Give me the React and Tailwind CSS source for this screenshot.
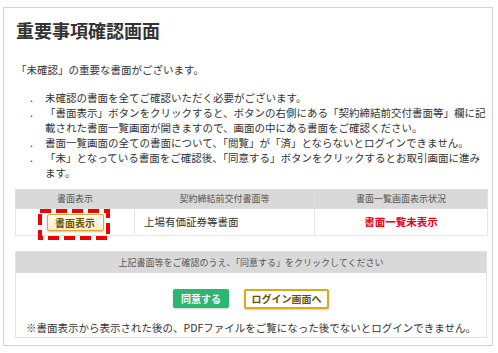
import React from 'react';

const font = { fontFamily: '"Noto Sans CJK JP", "Noto Sans", sans-serif' };

const notes = [
  '未確認の書面を全てご確認いただく必要がございます。',
  '「書面表示」ボタンをクリックすると、ボタンの右側にある「契約締結前交付書面等」欄に記載された書面一覧画面が開きますので、画面の中にある書面をご確認ください。',
  '書面一覧画面の全ての書面について、「閲覧」が「済」とならないとログインできません。',
  '「未」となっている書面をご確認後、「同意する」ボタンをクリックするとお取引画面に進みます。',
];

const App = () => {
  return (
    <div className="w-[498px] h-[353px] bg-white overflow-hidden pt-[7px] pl-[3px]" style={font}>
      <div className="w-[490px] h-[339px] border border-[#d4d4d4] bg-white">
        {/* Title */}
        <h1 className="pt-[10px] pl-[12px] text-[18px] leading-[24px] font-bold text-[#333]">
          重要事項確認画面
        </h1>

        <p className="mt-[20px] pl-[12px] text-[10.5px] leading-[15px] text-[#333]">
          「未確認」の重要な書面がございます。
        </p>

        {/* Notes */}
        <ul className="mt-[13px] pl-[26px] pr-[2px] text-[10.5px] leading-[15px] text-[#333]">
          {notes.map((n) => (
            <li key={n} className="flex">
              <span className="w-[15px] shrink-0">.</span>
              <span>{n}</span>
            </li>
          ))}
        </ul>

        {/* Document table */}
        <div className="relative mt-[9px] ml-[11px] w-[472px]">
          <table className="w-[472px] table-fixed border-collapse">
            <thead>
              <tr className="h-[19px] bg-[#d9d9d9] text-[9px] text-[#555]">
                <th className="w-[119px] border border-[#dedede] font-normal">書面表示</th>
                <th className="w-[180px] border border-[#dedede] font-normal">契約締結前交付書面等</th>
                <th className="w-[173px] border border-[#dedede] font-normal">書面一覧画面表示状況</th>
              </tr>
            </thead>
            <tbody>
              <tr className="h-[27px] text-[10.5px]">
                <td className="border border-[#e6e6e6] text-center">
                  <button className="w-[57px] h-[17px] border border-[#d6ab2e] rounded-[2px] bg-gradient-to-b from-[#fffdf2] to-[#f6edc9] text-[10px] font-bold text-[#6b5200] leading-[15px] shadow-[0_1px_2px_rgba(0,0,0,0.25)]">
                    書面表示
                  </button>
                </td>
                <td className="border border-[#e6e6e6] pl-[9px] text-[#333]">上場有価証券等書面</td>
                <td className="border border-[#e6e6e6] text-center font-bold text-[#e60012]">書面一覧未表示</td>
              </tr>
            </tbody>
          </table>
          {/* highlight */}
          <svg className="absolute left-[23px] top-[20px] pointer-events-none" width="72" height="31" viewBox="0 0 72 31">
            <rect x="2" y="2" width="68" height="27" fill="none" stroke="#ee0000" strokeWidth="4" strokeDasharray="11 5" />
          </svg>
        </div>

        {/* Agreement box */}
        <div className="mt-[15px] ml-[11px] w-[472px] h-[87px] border border-[#e2e2e2]">
          <div className="h-[21px] bg-[#d9d9d9] flex items-center justify-center text-[9px] text-[#555]">
            上記書面等をご確認のうえ、「同意する」をクリックしてください
          </div>
          <div className="mt-[16px] flex justify-center gap-[15px]">
            <button className="w-[56px] h-[19px] bg-[#2bb673] rounded-[2px] text-white text-[10px] font-bold leading-[19px] shadow-[0_1px_2px_rgba(0,0,0,0.2)]">
              同意する
            </button>
            <button className="w-[85px] h-[20px] border-2 border-[#d9ab14] bg-white rounded-[2px] text-[#6b5200] text-[10px] font-bold leading-[16px] shadow-[0_1px_2px_rgba(0,0,0,0.2)]">
              ログイン画面へ
            </button>
          </div>
          <p className="mt-[11px] text-center text-[10.5px] leading-[15px] text-[#333]">
            ※書面表示から表示された後の、PDFファイルをご覧になった後でないとログインできません。
          </p>
        </div>
      </div>
    </div>
  );
};

export default App;
